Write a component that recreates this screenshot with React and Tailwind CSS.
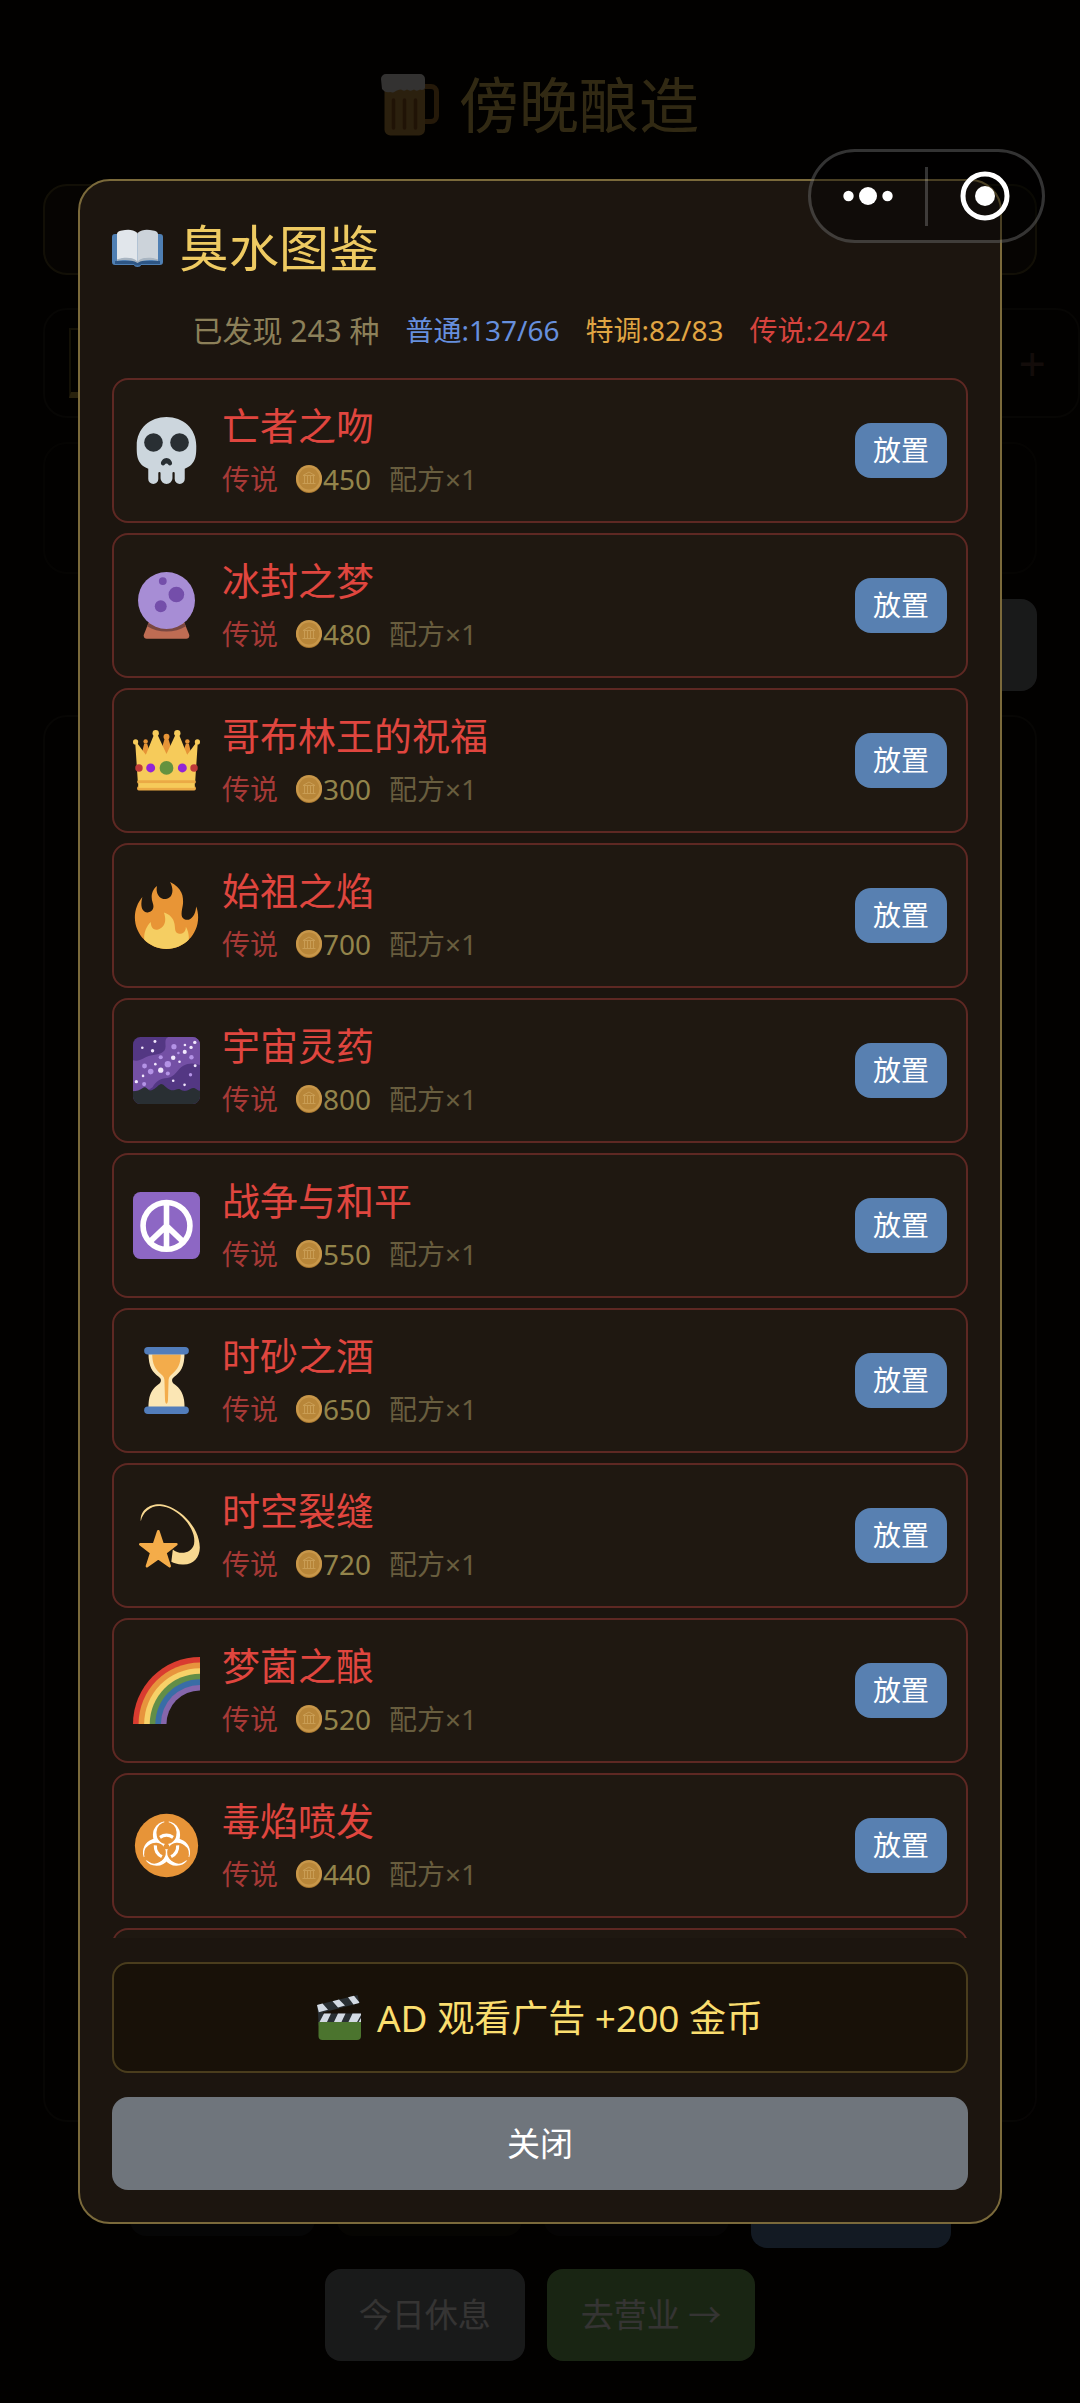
import React from "react";

function Skull() {
  return (
    <>
      <path
        fill="#CCD6DD"
        d="M34 15.5C34 6 26.8 0 18 0S2 6 2 15.500c0 4.500-.2 10 6.200 12.300v5.500a2.700 2.700 0 0 0 5.400 0v-3.200a.6.6 0 0 1 1.200 0v2.800a3.200 3.100 0 0 0 6.400 0v-2.800a.6.6 0 0 1 1.200 0v3.200a2.700 2.700 0 0 0 5.400 0v-5.500C34.200 25.500 34 20 34 15.500z"
      />
      <circle cx="11" cy="13.700" r="5" fill="#292F33" />
      <circle cx="25" cy="13.700" r="5" fill="#292F33" />
      <path
        fill="#292F33"
        d="M18 22c1.600 0 3 1.600 3 2.900s-1.600 1.500-2.100.6c-.3-.7-1.500-.7-1.800 0-.5.900-2.100.7-2.100-.6S16.400 22 18 22z"
      />
    </>
  );
}

function CrystalBall() {
  return (
    <>
      <path fill="#BE6C53" d="M8.500 27h19l2.600 6.500c.5 1.300-.2 2.300-1.500 2.300H7.400c-1.300 0-2-1-1.500-2.300z" />
      <path fill="#7A4740" d="M8.200 27.700h19.600l.6 1.400C25.500 31 21.800 32 18 32S10.500 31 7.600 29.100z" />
      <circle cx="18" cy="15.300" r="15.300" fill="#A78DD5" />
      <circle cx="16" cy="4.900" r="2.100" fill="#744EAA" />
      <circle cx="23.300" cy="12.100" r="4.200" fill="#744EAA" />
      <circle cx="14.900" cy="18.400" r="3.200" fill="#744EAA" />
    </>
  );
}

function Crown() {
  return (
    <>
      <g fill="#E69437">
        <path d="M4 17 6 9h1.600l3 9zM25.400 18l3-9H30l2 8zM14 16l3.100-10h1.800L22 16z" />
        <circle cx="6.800" cy="7.800" r="1.200" />
        <circle cx="29.200" cy="7.800" r="1.200" />
        <circle cx="18" cy="5.200" r="1.600" />
      </g>
      <path
        fill="#F6CB5A"
        d="M2.600 29.500 1.200 8.500h.9l4.800 6.400 4.500-11.200h1.600l5 10.800 5-10.800h1.600l4.500 11.200 4.800-6.400h.9l-1.400 21z"
      />
      <g fill="#F6CB5A">
        <circle cx="1.400" cy="8" r="1.400" />
        <circle cx="12.200" cy="3.300" r="1.700" />
        <circle cx="23.800" cy="3.300" r="1.700" />
        <circle cx="34.600" cy="8" r="1.400" />
      </g>
      <rect x="2.200" y="28.600" width="31.600" height="1.800" rx=".9" fill="#EBAA45" />
      <rect x="2.800" y="30.100" width="30.400" height="2" fill="#F6CB5A" />
      <rect x="2.200" y="31.900" width="31.600" height="2.200" rx=".9" fill="#EBAA45" />
      <rect x="3" y="31.500" width="30" height="1.200" fill="#F6CB5A" />
      <circle cx="3.200" cy="22" r="2" fill="#BE3A3A" />
      <circle cx="32.800" cy="22" r="2" fill="#BE3A3A" />
      <circle cx="9.500" cy="22" r="2.400" fill="#9225D5" />
      <circle cx="26.500" cy="22" r="2.400" fill="#9225D5" />
      <circle cx="18" cy="22" r="3.700" fill="#64923F" />
    </>
  );
}

function Fire() {
  return (
    <>
      <path
        fill="#E89536"
        d="M35 19c0-2.062-.367-4.039-1.040-5.868-.46 5.389-3.333 8.157-6.335 6.868-2.812-1.208-.917-5.917-.777-8.164.236-3.809-.012-8.169-6.931-11.794 2.875 5.500.333 8.917-2.333 9.125-2.958.231-5.667-2.542-4.667-7.042-3.238 2.386-3.332 6.402-2.333 9 1.042 2.708-.042 4.958-2.583 5.208-2.840.280-4.418-3.041-2.963-8.333C2.520 10.965 1 14.805 1 19c0 9.389 7.611 17 17 17s17-7.611 17-17z"
      />
      <path
        fill="#F5CE62"
        d="M28.394 23.999c.148 3.084-2.561 4.293-4.019 3.709-2.106-.843-1.541-2.291-2.083-5.291s-2.625-5.083-5.708-6c2.250 6.333-1.247 8.667-3.080 9.084-1.872.426-3.753-.001-3.968-4.007C7.352 23.668 6 26.676 6 30c0 .368.023.730.055 1.090C9.125 34.124 13.342 36 18 36s8.875-1.876 11.945-4.910c.032-.360.055-.722.055-1.090 0-2.187-.584-4.236-1.606-6.001z"
      />
    </>
  );
}

const brightStars = [
  [11.8, 2.4, 0.8], [5, 5.8, 0.7], [10.5, 7.4, 0.9], [33.2, 2.9, 0.9], [31.2, 5.6, 0.9],
  [27.9, 4.3, 0.7], [27.8, 8, 1.1], [21.6, 11.1, 1.2], [25, 13.3, 0.7], [33.4, 15.5, 0.8],
  [14.9, 17.8, 1.4], [12, 14.6, 0.7], [5.4, 20.9, 0.7], [1.8, 24, 0.9], [21.6, 23.5, 0.7], [27.7, 25.7, 0.7],
];
const dimStars = [
  [22, 5.2, 1.4], [24.4, 8.6, 0.7], [31.4, 10.9, 1.2], [14.9, 10.9, 1.1], [6.2, 15.6, 1.3],
  [18.7, 14.6, 1.7], [9.5, 18.6, 1.5], [18.7, 19.6, 1.1], [30.9, 20.3, 0.9], [6, 25.3, 1.1],
];

function MilkyWay() {
  return (
    <>
      <rect width="36" height="36" rx="4" fill="#533783" />
      <path
        fill="#7450A5"
        d="M0 12.500c4 1 6-1.800 9.500-2.500 4-.8 8-1 8-5C17.500 2.500 17 1 19 0h13a4 4 0 0 1 4 4v11c-3-1-6-1.200-9 .5-3.500 2-4 6-8.500 6.500-4 .4-6 1.500-8 5L6 30l-6-1z"
      />
      {dimStars.map(([x, y, r]) => (
        <circle key={`${x}-${y}`} cx={x} cy={y} r={r} fill="#B493E6" />
      ))}
      {brightStars.map(([x, y, r]) => (
        <circle key={`${x}-${y}`} cx={x} cy={y} r={r} fill="#F1E7FC" />
      ))}
      <path
        fill="#292F33"
        d="M0 29.200c2-.2 3.500-.5 5.700-2.100 1.200-.6 2 .8 3.300 1.600 2.500.2 4-2.600 6-3.400 1.800 0 3 2.800 5.500 3.300 2 .3 3-1 4.500-.6 1.500 1 3 1.400 4.500.6 1.500-.9 2.500-1.600 3.700-1 1 .5 1.500 1.300 2.800 1.300V32a4 4 0 0 1-4 4H4a4 4 0 0 1-4-4z"
      />
    </>
  );
}

function Peace() {
  return (
    <>
      <rect width="36" height="36" rx="4" fill="#8D67C4" />
      <g fill="none" stroke="#FFF" strokeWidth="3">
        <circle cx="18" cy="18.200" r="12.600" />
        <path d="M18 6v24.500M18 18.200l-9 8.600M18 18.200l9 8.600" />
      </g>
    </>
  );
}

function Hourglass() {
  return (
    <>
      <path
        fill="#FBE6B4"
        d="M8.300 3h19.400c0 8-2.200 10.500-5.500 13-.9.700-1.200 1.200-1.200 2s.4 1.400 1.300 2c3.700 2.600 5.400 6 5.400 12.500H8.300c0-6.500 1.700-9.900 5.400-12.500.9-.6 1.300-1.200 1.300-2s-.3-1.300-1.200-2C10.500 13.500 8.300 11 8.300 3z"
      />
      <path
        fill="#F3AC4B"
        d="M10.300 4h15.400c-.2 5.500-1.500 7.600-4.800 10.600-1.400 1.200-1.800 2.100-1.800 3.400l-.3 10.500c-.1 2.600-1.500 2.600-1.600 0L16.900 18c0-1.300-.4-2.200-1.800-3.400-3.300-3-4.600-5.100-4.800-10.600z"
      />
      <rect x="6" width="24" height="4" rx="2" fill="#527DBB" />
      <rect x="6" y="32" width="24" height="4" rx="2" fill="#527DBB" />
    </>
  );
}

function Dizzy() {
  return (
    <>
      <path
        fill="#F8D891"
        d="M4.200 10.300C3.600 4.500 9 .8 14.800 1.200 24 2 35.900 13 35.900 24.500c0 5.600-3.800 9.500-9.400 9.100-2.700-.2-4.500-.7-5.900-1.500l.8-6.600c3.300 3 10 2.400 11.400-2.800C34.600 14.600 24 2.600 14.500 2.200 9.500 2 5.400 5.300 4.200 10.300z"
      />
      <path
        fill="#F4AC49"
        stroke="#F4AC49"
        strokeWidth="1.400"
        strokeLinejoin="round"
        d="m13.600 15.700 2.300 7h7.400l-5.900 4.600 2.300 7.200-6.100-4.300-6.100 4.300 2.300-7.200-5.900-4.600h7.400z"
      />
    </>
  );
}

function Rainbow() {
  return (
    <>
      <path fill="#D93C30" d="M0 36A36 36 0 0 1 36 0v36z" />
      <path fill="#E7943D" d="M3 36A33 33 0 0 1 36 3v33z" />
      <path fill="#F7D168" d="M6 36A30 30 0 0 1 36 6v30z" />
      <path fill="#628E47" d="M9 36A27 27 0 0 1 36 9v27z" />
      <path fill="#396DA6" d="M12 36a24 24 0 0 1 24-24v24z" />
      <path fill="#8566AC" d="M15 36a21 21 0 0 1 21-21v21z" />
      <path fill="#1F1811" d="M18 36a18 18 0 0 1 18-18v18z" />
    </>
  );
}

const thirds = ["rotate(0 18 18.5)", "rotate(120 18 18.5)", "rotate(240 18 18.5)"];

function Biohazard() {
  return (
    <>
      <circle cx="18" cy="18" r="17" fill="#E79438" />
      {thirds.map((t) => (
        <circle key={t} transform={t} cx="18" cy="12.300" r="7.300" fill="#FFF" />
      ))}
      {thirds.map((t) => (
        <path
          key={t}
          transform={t}
          fill="#E79438"
          d="M16.800 4.800h2.400v2a5.300 5.300 0 1 1-2.400 0z"
        />
      ))}
      {thirds.map((t) => (
        <circle key={t} transform={t} cx="18" cy="10.800" r="5.400" fill="#E79438" />
      ))}
      {thirds.map((t) => (
        <path
          key={t}
          transform={t}
          d="M14.500 13.600a6.400 6.400 0 0 1 7 0"
          fill="none"
          stroke="#FFF"
          strokeWidth="1.700"
        />
      ))}
      {thirds.map((t) => (
        <path key={t} transform={t} d="M18 18.500v-3" stroke="#E79438" strokeWidth=".7" />
      ))}
      <circle cx="18" cy="18.500" r="1.500" fill="#E79438" />
    </>
  );
}

function Emoji({ children }) {
  return (
    <svg viewBox="0 0 36 36" className="size-[67px] shrink-0" aria-hidden="true">
      {children}
    </svg>
  );
}

function Coin() {
  return (
    <svg viewBox="0 0 26 28" className="h-[28px] w-[26px] shrink-0" aria-hidden="true">
      <ellipse cx="13" cy="14.500" rx="13" ry="13.500" fill="#A8772F" />
      <ellipse cx="13" cy="13.500" rx="13" ry="13.500" fill="#C8974A" />
      <ellipse cx="13" cy="13.500" rx="10.500" ry="11" fill="#B88639" />
      <g fill="none" stroke="#C99D54" strokeWidth="1">
        <path d="M7 10.500 13 7l6 3.500zM6.500 18.500h13M8.500 11v7M11.500 11v7M14.500 11v7M17.500 11v7" />
      </g>
    </svg>
  );
}

function Book() {
  return (
    <svg viewBox="0 0 51 38" className="h-[38px] w-[51px] shrink-0" aria-hidden="true">
      <path fill="#4F7FB3" d="M3 5h45a3 3 0 0 1 3 3v25a3 3 0 0 1-3 3H29c0 2.500-7 2.500-7 0H3a3 3 0 0 1-3-3V8a3 3 0 0 1 3-3z" />
      <path fill="#2E5685" d="M3 32h45v3H29c0 2-7 2-7 0H3z" />
      <path fill="#E1E6EB" d="M25.500 4C21 0 15 .5 10 1.500 6 2.300 5.500 3 5 5v26c6-2 15-3 20.500 2z" />
      <path fill="#CCD3DA" d="M25.500 4C30 0 36 .5 41 1.500c4 .8 4.500 1.500 5 3.500v26c-6-2-15-3-20.500 2z" />
      <path fill="#A9B5C1" d="M5 30.500c7-2.500 16-2.500 20.500 2 4.500-4.500 13.500-4.500 20.500-2V32c-6-1.500-15-1.500-20.500 2C20 30.500 11 30.500 5 32z" />
    </svg>
  );
}

function Clapper() {
  return (
    <svg viewBox="0 0 44 45" className="h-[45px] w-[44px] shrink-0" aria-hidden="true">
      <path fill="#292F33" d="M0 10 40.500 0l2 8L6 17.500V27H2z" />
      <path fill="#D3DAE3" d="m0 10 5.500-1.400 5.500 6.200-9.200 2.400zM15.500 6.200l6.500-1.600 6 6-7 1.800zM31 2.300 37 .8l5.300 6.400-.3.900-5.500 1.400z" />
      <rect x="1.500" y="18.500" width="42.500" height="12" fill="#292F33" />
      <path fill="#D3DAE3" d="M7 18.500h7L9.500 28H2zM21 18.500h7.500L24 28h-7.500zM35.500 18.500H44V20l-4.500 8H31z" />
      <path fill="#D3DAE3" d="M44 23v5h-3z" />
      <path fill="#4B742E" d="M1.500 27H44v14a4 4 0 0 1-4 4H5.500a4 4 0 0 1-4-4z" />
    </svg>
  );
}

function Beer() {
  return (
    <svg viewBox="0 0 58 62" className="h-[62px] w-[58px] shrink-0" aria-hidden="true">
      <path fill="none" stroke="#B07A30" strokeWidth="5" d="M43 12.500h7a5.500 5.500 0 0 1 5.500 5.500v24a5.500 5.500 0 0 1-5.500 5.500h-7" />
      <rect x="3.500" y="10" width="40.500" height="51.500" rx="6" fill="#CC9A45" />
      <g stroke="#9A5A22" strokeWidth="3.500" strokeLinecap="round">
        <path d="M12.500 26v28M23.500 26v28M34.500 26v28" />
      </g>
      <path fill="#F4F4F4" d="M5 0h34a5 5 0 0 1 5 5v9c-1 2-3 2.500-5 1.500-2 1.500-4.500 1.500-6 0-2 1.500-5 1.500-7 0-2 1.500-4 1.500-6 0-3 0-4 1-6 2-2 1.500-3 1-5 .5-3 1-6-.5-8-3L0 5a5 5 0 0 1 5-5z" />
    </svg>
  );
}

const drinks = [
  { name: "亡者之吻", price: 450, Icon: Skull },
  { name: "冰封之梦", price: 480, Icon: CrystalBall },
  { name: "哥布林王的祝福", price: 300, Icon: Crown },
  { name: "始祖之焰", price: 700, Icon: Fire },
  { name: "宇宙灵药", price: 800, Icon: MilkyWay },
  { name: "战争与和平", price: 550, Icon: Peace },
  { name: "时砂之酒", price: 650, Icon: Hourglass },
  { name: "时空裂缝", price: 720, Icon: Dizzy },
  { name: "梦菌之酿", price: 520, Icon: Rainbow },
  { name: "毒焰喷发", price: 440, Icon: Biohazard },
];

function DrinkRow({ name, price, Icon }) {
  return (
    <li className="flex min-h-[145px] shrink-0 items-center rounded-2xl border-2 border-[#5e2823] bg-[#1f1811] px-[19px]">
      <Emoji>
        <Icon />
      </Emoji>
      <div className="ml-[22px] min-w-0 flex-1 pb-1">
        <h3 className="text-[38px] leading-[56px] text-[#e0463f]">{name}</h3>
        <p className="mt-1 flex items-center gap-[18px] text-[28px] leading-[44px]">
          <span className="text-[#a63a37]">传说</span>
          <span className="flex items-center gap-px text-[#93844b]">
            <Coin />
            {price}
          </span>
          <span className="text-[#685d3e]">配方×1</span>
        </p>
      </div>
      <button type="button" className="rounded-2xl bg-[#5880b1] px-[18px] text-[28px] leading-[55px] text-white">
        放置
      </button>
    </li>
  );
}

function BrewingPage() {
  return (
    <div className="flex min-h-screen flex-col px-[43px] pt-[60px] opacity-20" aria-hidden="true">
      <header className="flex h-[90px] items-center justify-center gap-5 text-[60px] text-[#ecc962]">
        <Beer />
        <h1>傍晚酿造</h1>
      </header>
      <div className="mt-[34px] h-[91px] rounded-3xl border-2 border-[#544a20] bg-[#17130a]" />
      <div className="-mr-[43px] mt-[33px] flex h-[110px] items-center justify-between rounded-3xl border-2 border-[#1c1a14] px-6">
        <div className="h-[70px] w-[180px] border-2 border-b-[6px] border-[#5c5020] border-b-[#c0a040]" />
        <span className="pr-2 text-[48px] text-[#583c34]">+</span>
      </div>
      <div className="mt-[24px] h-[132px] rounded-3xl border-2 border-[#14120e]" />
      <div className="mt-[25px] h-[92px] w-[200px] self-end rounded-2xl bg-[#787d84]" />
      <div className="mt-[24px] min-h-[1407px] flex-1 rounded-3xl border-2 border-[#1c1a14]" />
      <div className="mt-[34px] flex items-center justify-center gap-[22px]">
        <div className="h-[68px] w-[185px] rounded-2xl bg-[#161a20]" />
        <div className="h-[68px] w-[185px] rounded-2xl bg-[#1a160c]" />
        <div className="h-[68px] w-[185px] rounded-2xl bg-[#141416]" />
        <div className="h-[92px] w-[200px] rounded-2xl bg-[#5880b1]" />
      </div>
      <div className="mb-[42px] mt-[21px] flex justify-center gap-[22px] text-[33px] leading-[92px] text-white">
        <button type="button" tabIndex={-1} className="rounded-2xl bg-[#787d84] px-[34px]">
          今日休息
        </button>
        <button type="button" tabIndex={-1} className="rounded-2xl bg-[#78b460] px-[34px]">
          去营业 →
        </button>
      </div>
    </div>
  );
}

function CodexDialog() {
  return (
    <div className="fixed inset-0 flex items-center px-[78px] py-[179px]">
      <section
        role="dialog"
        aria-labelledby="codex-title"
        className="flex max-h-full w-full flex-col rounded-[32px] border-2 border-[#7b6a3b] bg-[#1c150f] p-8"
      >
        <h2 id="codex-title" className="flex items-center gap-4 text-[50px] leading-[70px] text-[#eeca62]">
          <Book />
          臭水图鉴
        </h2>
        <div className="mt-6 flex items-center justify-center gap-[26px] text-[28px] leading-[47px]">
          <span className="text-[30px] text-[#8c8059]">已发现 243 种</span>
          <span className="text-[#668fdd]">普通:137/66</span>
          <span className="text-[#e0a543]">特调:82/83</span>
          <span className="text-[#d6433e]">传说:24/24</span>
        </div>
        <ul className="mt-6 flex min-h-0 flex-1 flex-col gap-[10px] overflow-y-auto [scrollbar-width:none]">
          {drinks.map((drink) => (
            <DrinkRow key={drink.name} {...drink} />
          ))}
          <li className="min-h-[145px] shrink-0 rounded-2xl border-2 border-[#5e2823] bg-[#1f1811]" />
        </ul>
        <button
          type="button"
          className="mt-6 flex h-[111px] shrink-0 items-center justify-center gap-4 rounded-2xl border-2 border-[#4a3d1d] bg-[#181108] text-[37px] text-[#fade6f]"
        >
          <Clapper />
          AD 观看广告 +200 金币
        </button>
        <button
          type="button"
          className="mt-6 h-[93px] shrink-0 rounded-2xl bg-[#6f757c] text-[33px] text-white"
        >
          关闭
        </button>
      </section>
    </div>
  );
}

function Capsule() {
  return (
    <div className="fixed right-[35px] top-[149px] flex h-[94px] w-[237px] items-center rounded-full border-[3px] border-white/20 bg-black/40">
      <button type="button" aria-label="更多" className="flex h-full flex-1 items-center justify-center">
        <svg viewBox="0 0 50 18" className="h-[18px] w-[50px]">
          <circle cx="5.500" cy="9" r="5.200" fill="#FFF" />
          <circle cx="25" cy="9" r="9" fill="#FFF" />
          <circle cx="44.500" cy="9" r="5.200" fill="#FFF" />
        </svg>
      </button>
      <span className="h-[59px] w-[3px] bg-white/20" />
      <button type="button" aria-label="关闭小程序" className="flex h-full flex-1 items-center justify-center">
        <svg viewBox="0 0 50 50" className="size-[50px]">
          <circle cx="25" cy="25" r="22" fill="none" stroke="#FFF" strokeWidth="5" />
          <circle cx="25" cy="25" r="10" fill="#FFF" />
        </svg>
      </button>
    </div>
  );
}

export default function App() {
  return (
    <main className="min-h-screen overflow-hidden bg-[#020100] font-['Noto_Sans','Noto_Sans_CJK_SC',sans-serif]">
      <BrewingPage />
      <CodexDialog />
      <Capsule />
    </main>
  );
}
